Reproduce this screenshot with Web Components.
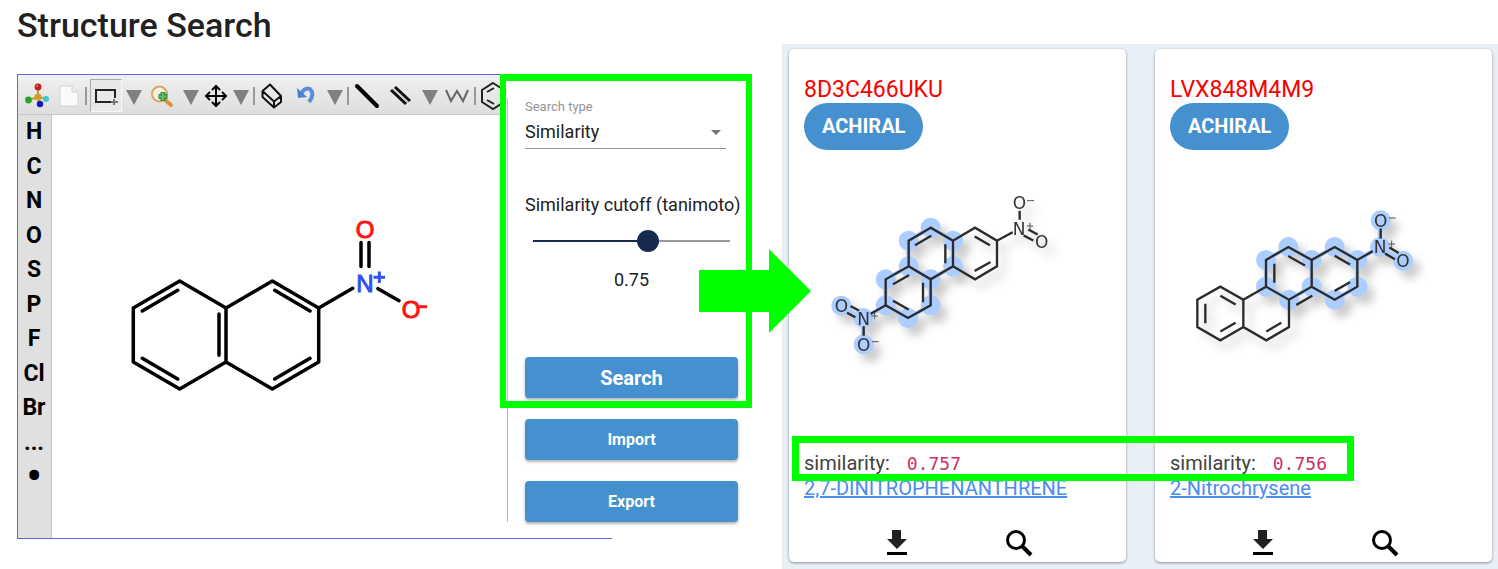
<!DOCTYPE html>
<html lang="en">
<head>
<meta charset="utf-8">
<title>Structure Search</title>
<style>
  body { margin: 0; background: #fff; font-family: Roboto, "Liberation Sans", sans-serif; color: #212121; }
</style>
</head>
<body>
<structure-search-page>
  <structure-sketcher slot="sketcher"></structure-sketcher>
  <search-form slot="form"></search-form>
  <result-card slot="results" code="8D3C466UKU" similarity="0.757" name="2,7-DINITROPHENANTHRENE">
    <molecule-dinitrophenanthrene></molecule-dinitrophenanthrene>
  </result-card>
  <result-card slot="results" code="LVX848M4M9" similarity="0.756" name="2-Nitrochrysene">
    <molecule-nitrochrysene></molecule-nitrochrysene>
  </result-card>
</structure-search-page>

<script>
function define(name, html, setup) {
  const template = document.createElement('template');
  template.innerHTML = html;
  customElements.define(name, class extends HTMLElement {
    constructor() {
      super();
      this.attachShadow({ mode: 'open' }).append(template.content.cloneNode(true));
    }
    connectedCallback() { if (setup) setup(this, this.shadowRoot); }
  });
}

/* Page frame: search workspace on the left, results on the right */
define('structure-search-page', `
<style>
  :host { display: grid; grid-template-columns: minmax(0, 782fr) minmax(0, 716fr); min-height: 100vh; }
  .search { padding-left: 17px; }
  h1 { margin: 0; padding-bottom: 24px; font-size: 34px; line-height: 50px; font-weight: 500; }
  .workspace { position: relative; display: grid; grid-template-columns: minmax(0, 1fr) 112px 140px 30px; }
  slot[name=sketcher]::slotted(*) { grid-area: 1 / 1 / 2 / 3; }
  slot[name=form]::slotted(*) { grid-area: 1 / 2 / 2 / 4; align-self: start; }
  .arrow { position: absolute; top: 175px; right: -29px; width: 112px; height: 84px; fill: #0f0; z-index: 2; }
  .results { position: relative; display: flex; align-items: flex-start; gap: 29px; margin-top: 44px;
    padding: 5px 6px 7px 7px; background: #e9eff6; }
  .results ::slotted(*) { flex: 1 1 0; min-width: 0; }
  .mark { position: absolute; left: 10px; right: 144px; bottom: 88px; height: 45px; border: 7px solid #0f0;
    box-sizing: border-box; pointer-events: none; }
</style>
<section class="search">
  <h1>Structure Search</h1>
  <div class="workspace">
    <slot name="sketcher"></slot>
    <slot name="form"></slot>
    <svg class="arrow" viewBox="0 0 112 84" aria-hidden="true"><path d="M0 21H70V0L112 42L70 84V63H0Z"/></svg>
  </div>
</section>
<section class="results" aria-label="Results">
  <slot name="results"></slot>
  <div class="mark"></div>
</section>`);

/* Structure editor */
const drop = '<button aria-label="More"><svg width="16" height="18"><path d="M0 3H16L8 18Z" fill="#808080"/></svg></button>';
const sep = '<i></i>';
define('structure-sketcher', `
<style>
  :host { display: grid; grid-template: 40px 1fr / 34px 1fr; height: 465px; box-sizing: border-box;
    border: 1px solid #6464dc; border-right: 0; overflow: hidden; }
  .toolbar { grid-column: 1 / 3; display: grid; align-items: center; justify-items: center;
    grid-template-columns: 38px 26px 8px 32px 23px 34px 23px 27px 23px 4px 32px 36px 22px 4px 34px 34px 24px 30px 6px 30px;
    background: linear-gradient(#f0f0f0, #dedede); border-bottom: 1px solid #c8c8c8; padding-top: 2px; box-sizing: border-box; }
  .toolbar i { width: 2px; height: 18px; background: #999; }
  button { border: 0; padding: 0; margin: 0; background: none; display: block; font: inherit; color: inherit; }
  .toolbar svg { display: block; overflow: visible; }
  .toolbar .on { width: 32px; height: 33px; display: grid; place-items: center; border: 1px solid #f8f8f8;
    border-top-color: #aaa; border-left-color: #aaa; background: #e8e8e8; box-sizing: border-box; }
  .elements { display: grid; align-content: space-between; padding-bottom: 44px; background: #e0e0e0; border-right: 1px solid #c4c4c4; box-sizing: border-box; }
  .elements button { width: 32px; height: 34px; font-size: 23px; line-height: 34px; font-weight: 700; color: #000; text-align: center; }
  .elements .any { font-size: 42px; }
  .canvas { background: #fff; }
  .canvas svg { display: block; }
  text { font: 24px "Liberation Sans", sans-serif; text-anchor: middle; stroke-width: 1; }
</style>
<div class="toolbar" role="toolbar" aria-label="Drawing tools">
  <button aria-label="Menu"><svg width="24" height="24" viewBox="0 0 24 24">
    <path d="M13 3V13L4 16M13 13L22 15M13 13L15 20" stroke="#b9a13c" stroke-width="2" fill="none"/>
    <circle cx="13" cy="3" r="3.400" fill="#c8191c"/><circle cx="3.500" cy="16" r="3.400" fill="#26a526"/>
    <circle cx="21" cy="15" r="3" fill="#3cc6d6"/><circle cx="15" cy="20" r="3.200" fill="#1616c4"/>
    <circle cx="13" cy="13" r="3.600" fill="#d59c25"/><circle cx="12" cy="2" r="1" fill="#f08080"/></svg></button>
  <button aria-label="New"><svg width="20" height="22"><path d="M1 2Q1 1 2 1H13L19 7V20Q19 21 18 21H2Q1 21 1 20Z" fill="#fafafa" stroke="#d2d2d2"/><path d="M13 1V7H19" fill="#ececec" stroke="#d2d2d2"/></svg></button>
  ${sep}
  <button class="on" aria-label="Select"><svg width="24" height="18"><rect x="2" y="3" width="19" height="12" fill="none" stroke="#222" stroke-width="2"/><path d="M17 11h8v7h-8z" fill="#e8e8e8"/><path d="M20 12V18M17 15H24" stroke="#777" stroke-width="2"/></svg></button>
  ${drop}
  <button aria-label="Zoom"><svg width="24" height="24" viewBox="0 0 24 24"><path d="M15 16L21 21" stroke="#d9953f" stroke-width="4" stroke-linecap="round"/><circle cx="9.500" cy="10" r="7.500" fill="#f2f0e8" stroke="#dba75c" stroke-width="2"/><path d="M13 8V17M8.500 12.500H17.500" stroke="#3d8f42" stroke-width="5"/><path d="M13 9V16M9.500 12.500H16.500" stroke="#69b96c" stroke-width="2"/></svg></button>
  ${drop}
  <button aria-label="Move"><svg width="22" height="22" viewBox="0 0 22 22"><path d="M11 2V20M2 11H20" stroke="#000" stroke-width="2"/><path d="M7 5L11 1L15 5M7 17L11 21L15 17M5 7L1 11L5 15M17 7L21 11L17 15" fill="none" stroke="#000" stroke-width="2"/></svg></button>
  ${drop}
  ${sep}
  <button aria-label="Erase"><svg width="22" height="26" viewBox="0 0 22 26"><path d="M1.500 8L9 1.500L20 13V19L13 24.500L1.500 14ZM1.500 8L13 18.500L20 13M13 18.500V24.500" fill="#e8e8e8" stroke="#111" stroke-width="2" stroke-linejoin="round"/></svg></button>
  <button aria-label="Undo"><svg width="18" height="20" viewBox="0 0 18 20"><path d="M4 8Q8 1 13 3Q18 8 12 16" fill="none" stroke="#5a8fd6" stroke-width="4"/><path d="M0 2L1 12L10 11Z" fill="#4a80d0"/></svg></button>
  ${drop}
  ${sep}
  <button aria-label="Single bond"><svg width="24" height="24"><path d="M2 2L22 22" stroke="#000" stroke-width="4" stroke-linecap="round"/></svg></button>
  <button aria-label="Double bond"><svg width="22" height="20"><path d="M5 1L20 15M1 4L16 18" stroke="#111" stroke-width="3"/><path d="M3 3L18 17" stroke="#bbb" stroke-width="1"/></svg></button>
  ${drop}
  <button aria-label="Chain"><svg width="24" height="14"><path d="M1 1L6 12L12 2L18 12L23 1" fill="none" stroke="#666" stroke-width="2"/></svg></button>
  ${sep}
  <button aria-label="Ring"><svg width="24" height="28" viewBox="0 0 24 28"><path d="M12 1L23 8V20L12 27L1 20V8ZM13 6L6 10M6 18L13 22" fill="none" stroke="#222" stroke-width="2"/></svg></button>
</div>
<div class="elements" role="toolbar" aria-label="Elements">
  <button>H</button><button>C</button><button>N</button><button>O</button><button>S</button><button>P</button><button>F</button><button>Cl</button><button>Br</button><button>...</button><button class="any">•</button>
</div>
<div class="canvas">
  <svg width="450" height="423" viewBox="52 115 450 423" role="img" aria-label="2-nitronaphthalene">
    <g fill="none" stroke="#000" stroke-width="3.500" stroke-linecap="round" stroke-linejoin="round">
      <path d="M226 308L179.700 281L133.300 308V362L179.700 389L226 362ZM226 308L272.300 281L318.700 308V362L272.300 389L226 362"/>
      <path d="M142.300 311L177.700 290.300M142.300 358.300L177.700 379M219 314V355.300M274.700 290.300L310 311M274.700 379L310 358.300"/>
      <path d="M318.700 308L352.700 288.300M361 242.500V266.500M369 242.500V266.500M378 288.700L399 300.700"/>
    </g>
    <g fill="#ff1414" stroke="#ff1414"><text x="365" y="238">O</text><text x="411" y="318">O</text><path d="M419 306.700H427" stroke-width="3"/></g>
    <g fill="#3250f0" stroke="#3250f0"><text x="365" y="292">N</text><path d="M373.500 277.300H385M379.300 271.500V283" stroke-width="3"/></g>
  </svg>
</div>`);

/* Query options */
define('search-form', `
<style>
  :host { display: block; position: relative; padding: 24px 0 8px 7px; background: #fff; }
  form { border-left: 1px solid #bbb; padding: 0 14px 0 17px; display: flex; flex-direction: column; }
  .caption { font-size: 13px; line-height: 17px; color: #949494; }
  .select { display: grid; align-items: center; width: 201px; }
  select { grid-area: 1 / 1; appearance: none; width: 100%; height: 34px; border: 0; border-bottom: 1px solid #949494; border-radius: 0;
    background: none; padding: 0; font: 18px/24px Roboto, sans-serif; color: #212121; }
  .select svg { grid-area: 1 / 1; justify-self: end; margin-right: 5px; pointer-events: none; }
  .cutoff { margin-top: 44px; font-size: 18px; line-height: 24px; white-space: nowrap; }
  input { appearance: none; margin: 13px 8px 16px; height: 22px; background: none; }
  input::-webkit-slider-runnable-track { height: 2px; background: linear-gradient(90deg, #172b51 58%, #9a9a9a 58%); }
  input::-webkit-slider-thumb { appearance: none; width: 22px; height: 22px; margin-top: -10px; border-radius: 50%; background: #172b51; }
  output { font-size: 18px; line-height: 24px; text-align: center; margin-bottom: 65px; }
  button { height: 41px; border: 0; border-radius: 4px; background: #4591d0; color: #fff; font: 700 16px Roboto, sans-serif;
    box-shadow: 0 2px 3px rgba(0,0,0,.3); }
  button + button { margin-top: 21px; }
  .primary { font-size: 20px; }
  .mark { position: absolute; inset: 0 0 auto 0; height: 334px; box-sizing: border-box; border: solid #0f0; border-width: 7px 6px; pointer-events: none; }
</style>
<form>
  <label class="caption" for="type">Search type</label>
  <div class="select">
    <select id="type"><option>Similarity</option><option>Substructure</option><option>Exact</option></select>
    <svg width="10" height="5" aria-hidden="true"><path d="M0 0H10L5 5Z" fill="#757575"/></svg>
  </div>
  <label class="cutoff" for="cutoff">Similarity cutoff (tanimoto)</label>
  <input id="cutoff" type="range" min="0.38" max="1" step="0.01" value="0.75">
  <output for="cutoff">0.75</output>
  <button type="button" class="primary">Search</button>
  <button type="button">Import</button>
  <button type="button">Export</button>
</form>
<div class="mark"></div>`, (host, root) => {
  const range = root.querySelector('input');
  range.addEventListener('input', () => { root.querySelector('output').textContent = Number(range.value).toFixed(2); });
});

/* One hit of the result list */
define('result-card', `
<style>
  :host { display: block; }
  article { background: #fff; border-radius: 5px; box-shadow: 0 1px 3px rgba(0,0,0,.4); padding: 27px 15px 3px; }
  h2 { margin: 0; font-size: 23px; line-height: 27px; font-weight: 400; color: #f80000; }
  .pill { display: inline-block; padding: 0 18px; border-radius: 24px; background: #4591d0; color: #fff; font-size: 20px; line-height: 47px; font-weight: 700; vertical-align: top; }
  .picture { height: 200px; margin: 20px 0 81px; overflow: hidden; }
  p { margin: 0; font-size: 20px; line-height: 25px; color: #424242; white-space: nowrap; }
  code { font: 18px/25px "DejaVu Sans Mono", monospace; color: #c8325f; margin-left: 12px; }
  a { color: #4a8cf0; text-decoration: underline; }
  .actions { display: flex; justify-content: center; gap: 90px; margin-top: 26px; }
  button { width: 32px; height: 32px; border: 0; padding: 0; background: none; display: grid; place-items: center; }
</style>
<article>
  <h2></h2>
  <span class="pill">ACHIRAL</span>
  <div class="picture"><slot></slot></div>
  <p>similarity: <code></code></p>
  <p><a href="#"></a></p>
  <div class="actions">
    <button aria-label="Download"><svg width="22" height="26"><path d="M6 0H15V9H21L11 19L1 9H6Z" fill="#212121"/><path d="M1 22H21V25H1Z" fill="#000"/></svg></button>
    <button aria-label="Search similar"><svg width="28" height="28" fill="none" stroke="#000"><circle cx="11" cy="11" r="8.500" stroke-width="3"/><path d="M17 17L26 26" stroke-width="4"/></svg></button>
  </div>
</article>`, (host, root) => {
  root.querySelector('h2').textContent = host.getAttribute('code');
  root.querySelector('code').textContent = host.getAttribute('similarity');
  root.querySelector('a').textContent = host.getAttribute('name');
});

const moleculeStyle = `
<style>
  :host { display: block; }
  svg { display: block; filter: drop-shadow(7px 8px 4px rgba(0,0,0,.2)); }
  .bond { fill: none; stroke: #2b2b2b; stroke-width: 7; stroke-linecap: square; }
  .hit { fill: none; stroke: #accdff; stroke-width: 13; stroke-linejoin: round; }
  .dot { fill: none; stroke: #accdff; stroke-width: 60; stroke-linecap: round; }
  text { font: 51px "DejaVu Sans", sans-serif; font-weight: 400; fill: #333; text-anchor: middle; }
  .charge { fill: none; stroke: #555; stroke-width: 3; }
</style>`;

define('molecule-dinitrophenanthrene', moleculeStyle + `
<svg width="305" height="200" viewBox="-48 -30 915 600" role="img" aria-label="2,7-dinitrophenanthrene">
  <path class="hit" d="M332 298L399 259V182L332 143L266 182V259L332 298V376L264 414L197 376V298L266 259M197 376L130 418L64 379M130 418V495"/>
  <path class="dot" d="M332 143h0M266 182h0M266 259h0M332 298h0M399 259h0M399 182h0M197 298h0M197 376h0M264 414h0M332 376h0M130 414h0M64 377h0M131 493h0"/>
  <path class="bond" d="M332 143L266 182V259L332 298L399 259V182ZM399 182L465 143L531 182V259L465 298L399 259M266 259L197 298V376L264 414L332 376V298"/>
  <path class="bond" d="M288 194L331 169M376 196V246M467 171L507 194M467 271L508 248M222 311L264 287M222 364L263 387M309 312V363M531 182L575 158M599 96V116M614 168L637 180M628 150L650 162M197 376L155 400M95 380L114 390M84 400L103 410M131 442V464"/>
  <text x="598" y="87">O</text><text x="597" y="165">N</text><text x="665" y="205">O</text>
  <text x="64" y="396">O</text><text x="131" y="435">N</text><text x="131" y="512">O</text>
  <path class="charge" d="M621 62H642M620 138H640M630 128V148M154 408H174M164 398V418M156 485H176"/>
</svg>`);

define('molecule-nitrochrysene', moleculeStyle + `
<svg width="305" height="200" viewBox="-30 -60 915 600" role="img" aria-label="2-nitrochrysene">
  <path class="hit" d="M395 210L325 171L258 210V290L327 329L395 290V210L464 171L532 210V290L464 329L395 290M532 210L600 171L669 213M600 171V92"/>
  <path class="dot" d="M325 171h0M258 210h0M258 290h0M327 329h0M395 290h0M395 210h0M464 171h0M532 210h0M532 290h0M464 329h0M600 171h0M602 91h0M669 212h0"/>
  <path class="bond" d="M395 210L325 171L258 210V290L327 329L395 290V210L464 171L532 210V290L464 329L395 290M327 329V411L259 451L190 411V329L258 290M190 329L121 290L52 329V411L121 451L190 411"/>
  <path class="bond" d="M283 225V275M328 200L372 225M352 343L394 319M467 199L507 222M467 301L507 278M262 423L301 400M124 319L164 342M76 345V396M124 423L164 400M532 210L575 185M602 119V142M618 192L642 206M631 174L653 187"/>
  <text x="602" y="110">O</text><text x="600" y="189">N</text><text x="669" y="231">O</text>
  <path class="charge" d="M627 84H647M625 162H645M635 152V172"/>
</svg>`);
</script>
</body>
</html>
